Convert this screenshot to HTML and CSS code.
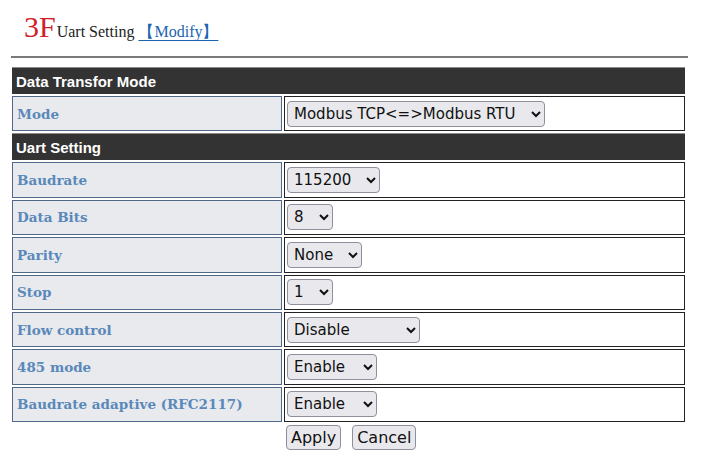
FILE: index.html
```html
<!DOCTYPE html>
<html>
<head>
<meta charset="utf-8">
<link rel="stylesheet" href="styles.css">
</head>
<body>
<div class="page">
  <div class="title">
    <span class="num">3F</span><span class="name">Uart Setting</span>
    <a class="modify" href="#">【Modify】</a>
  </div>
  <div class="rule"></div>
  <table class="settings">
    <tr class="hrow"><th colspan="2" class="head">Data Transfor Mode</th></tr>
    <tr>
      <td class="label">Mode</td>
      <td class="value"><select class="w-mode"><option>Modbus TCP&lt;=&gt;Modbus RTU</option></select></td>
    </tr>
    <tr class="hrow"><th colspan="2" class="head">Uart Setting</th></tr>
    <tr>
      <td class="label">Baudrate</td>
      <td class="value"><select class="w-baud"><option>115200</option></select></td>
    </tr>
    <tr>
      <td class="label">Data Bits</td>
      <td class="value"><select class="w-small"><option>8</option></select></td>
    </tr>
    <tr>
      <td class="label">Parity</td>
      <td class="value"><select class="w-parity"><option>None</option></select></td>
    </tr>
    <tr>
      <td class="label">Stop</td>
      <td class="value"><select class="w-small"><option>1</option></select></td>
    </tr>
    <tr>
      <td class="label">Flow control</td>
      <td class="value"><select class="w-flow"><option>Disable</option></select></td>
    </tr>
    <tr>
      <td class="label">485 mode</td>
      <td class="value"><select class="w-enable"><option>Enable</option></select></td>
    </tr>
    <tr>
      <td class="label">Baudrate adaptive (RFC2117)</td>
      <td class="value"><select class="w-enable"><option>Enable</option></select></td>
    </tr>
    <tr>
      <td class="blank"></td>
      <td class="actions"><button>Apply</button><button>Cancel</button></td>
    </tr>
  </table>
</div>
</body>
</html>
```
FILE: styles.css
```css
html, body { margin: 0; padding: 0; background: #fff; }
.page { padding: 10px 13px 0 11px; }
.title {
  font-family: "Liberation Serif", "Times New Roman", serif;
  height: 34px;
  padding-left: 13px;
  display: flex;
  align-items: baseline;
}
.num { color: #d0202a; font-size: 30px; line-height: 34px; }
.name { color: #222; font-size: 16px; margin-left: 1px; }
.modify {
  color: #1a64b0;
  font-size: 16px;
  margin-left: 4px;
  text-decoration: underline;
  text-underline-offset: 3px;
}
.rule { height: 2px; background: #7a7a7a; margin-top: 12px; width: 677px; }
.settings {
  margin-top: 7px;
  margin-left: -1px;
  width: 677px;
  border-collapse: separate;
  border-spacing: 2px 2px;
}
.settings td, .settings th { padding: 0; }
.head {
  background: #333333;
  color: #fff;
  font-family: "Liberation Sans", Arial, sans-serif;
  font-weight: bold;
  font-size: 15px;
  text-align: left;
  height: 27px;
  padding: 0 4px !important;
  border-top: 1px solid #8a8a8a;
  box-sizing: border-box;
}
.label {
  width: 270px;
  box-sizing: border-box;
  background: #e8eaed;
  border: 1px solid #50698a;
  color: #5a88ba;
  font-family: "DejaVu Serif", Georgia, serif;
  font-weight: bold;
  font-size: 13.5px;
  height: 35.4px;
  padding-left: 4px !important;
}
.value {
  border: 1px solid #222;
  background: #fff;
  height: 35.4px;
  padding-left: 2px !important;
  box-sizing: border-box;
}
select {
  font-family: "DejaVu Sans", Tahoma, sans-serif;
  font-size: 15px;
  color: #111;
  height: 26px;
  background-color: #e9e9ed;
  border: 1px solid #8f8f9d;
  border-radius: 4px;
  padding: 0 2px;
}
.w-mode { width: 258px; }
.w-baud { width: 93px; }
.w-small { width: 46px; }
.w-parity { width: 75px; }
.w-flow { width: 133px; }
.w-enable { width: 90px; }
.actions { padding-left: 2px !important; padding-top: 1px !important; vertical-align: top; }
.actions button {
  font-family: "DejaVu Sans", Tahoma, sans-serif;
  font-size: 16px;
  height: 25px;
  padding: 0 4px;
  background: #e9e9ed;
  border: 1px solid #8f8f9d;
  border-radius: 4px;
  color: #111;
  margin-right: 11px;
}
```
